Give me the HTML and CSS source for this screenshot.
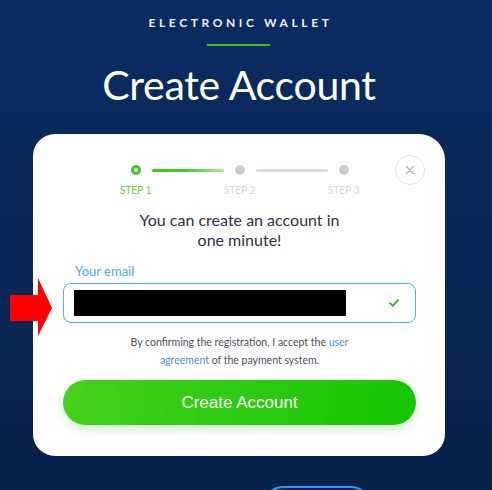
FILE: index.html
```html
<!DOCTYPE html>
<html>
<head>
<meta charset="utf-8">
<link rel="stylesheet" href="styles.css">
</head>
<body>
<div class="page">
  <header class="hero">
    <div class="eyebrow">ELECTRONIC WALLET</div>
    <div class="eyebrow-line"></div>
    <h1 class="title">Create Account</h1>
  </header>

  <div class="card-row">
    <div class="arrow">
      <svg width="42" height="60" viewBox="0 0 42 60"><polygon points="0,17 28,17 28,0 42,30 28,58 28,43 0,43" fill="#ff0000"/></svg>
    </div>
    <section class="card">
      <button class="close" aria-label="close">
        <svg width="10" height="10" viewBox="0 0 10 10"><path d="M1.5 1.5 L8.5 8.5 M8.5 1.5 L1.5 8.5" stroke="#b7bcc8" stroke-width="1.6" stroke-linecap="round"/></svg>
      </button>

      <div class="stepper">
        <div class="track">
          <span class="dot dot-active"></span>
          <span class="line line-active"></span>
          <span class="dot"></span>
          <span class="line"></span>
          <span class="dot"></span>
        </div>
        <div class="labels">
          <span class="label label-active">STEP 1</span>
          <span class="label">STEP 2</span>
          <span class="label">STEP 3</span>
        </div>
      </div>

      <p class="lead">You can create an account in<br>one minute!</p>

      <label class="field-label">Your email</label>
      <div class="input">
        <div class="redact"></div>
        <svg class="check" width="10" height="8" viewBox="0 0 10 8"><path d="M1 4.2 L3.8 6.8 L9 1.2" fill="none" stroke="#2fb81a" stroke-width="1.8" stroke-linecap="round" stroke-linejoin="round"/></svg>
      </div>

      <p class="terms">By confirming the registration, I accept the <a class="link">user<br>agreement</a> of the payment system.</p>

      <button class="submit">Create Account</button>
    </section>
  </div>

  <div class="below">
    <div class="outline-btn"></div>
  </div>
</div>
</body>
</html>
```

FILE: styles.css
```css
* { box-sizing: border-box; }
html, body { margin: 0; padding: 0; }
body {
  width: 492px;
  height: 490px;
  overflow: hidden;
  background: linear-gradient(180deg, #0b2b62 0%, #0a2857 45%, #08214a 100%);
  font-family: "Lato", "Open Sans", sans-serif;
}
.page {
  width: 478px;
  display: flex;
  flex-direction: column;
  align-items: center;
}
.hero {
  display: flex;
  flex-direction: column;
  align-items: center;
  padding-top: 15px;
}
.eyebrow {
  color: #eef2f8;
  font-size: 12px;
  font-weight: 700;
  letter-spacing: 3.6px;
  line-height: 15px;
  padding-left: 3px;
}
.eyebrow-line {
  width: 63px;
  height: 2px;
  background: #39c51a;
  margin-top: 14px;
}
.title {
  margin: 13px 0 0;
  color: #ffffff;
  font-size: 41px;
  font-weight: 400;
  line-height: 52px;
  letter-spacing: -0.3px;
}
.card-row {
  width: 478px;
  position: relative;
  margin-top: 23px;
  display: flex;
  justify-content: flex-start;
}
.arrow {
  position: absolute;
  left: 10px;
  top: 144px;
  width: 42px;
  height: 60px;
  z-index: 2;
}
.arrow svg { display: block; }
.card {
  position: relative;
  margin-left: 33px;
  width: 412px;
  background: #ffffff;
  border-radius: 22px 26px 22px 22px;
  padding: 31px 29px 31px 30px;
  display: flex;
  flex-direction: column;
  align-items: stretch;
}
.close {
  position: absolute;
  top: 21px;
  right: 20px;
  width: 30px;
  height: 30px;
  border-radius: 50%;
  border: 1px solid #e3e5ea;
  background: #fff;
  display: flex;
  align-items: center;
  justify-content: center;
  padding: 0;
}
.close svg { display: block; }
.stepper {
  display: flex;
  flex-direction: column;
  align-items: center;
}
.track {
  display: grid;
  grid-template-columns: 10px 72px 10px 72px 10px;
  column-gap: 11px;
  align-items: center;
  height: 10px;
}
.dot {
  width: 10px;
  height: 10px;
  border-radius: 50%;
  background: #c9cdd5;
}
.dot-active {
  background: #fff;
  border: 3px solid #3cc81a;
}
.line {
  height: 3px;
  border-radius: 2px;
  background: #d6d9df;
}
.line-active {
  background: linear-gradient(90deg, #3cc81a 0%, #45c820 45%, #b6e4a6 100%);
}
.labels {
  display: grid;
  grid-template-columns: 104px 104px 104px;
  margin-top: 9px;
}
.label {
  text-align: center;
  font-size: 10.5px;
  line-height: 12px;
  color: #d3d6dc;
  letter-spacing: -0.2px;
}
.label-active { color: #6cd033; }
.lead {
  margin: 14px 0 0;
  text-align: center;
  color: #2b3242;
  font-size: 16px;
  line-height: 20px;
}
.field-label {
  display: block;
  margin-top: 13px;
  padding-left: 12px;
  color: #4aa9ec;
  font-size: 13px;
  line-height: 16px;
}
.input {
  margin-top: 4px;
  height: 40px;
  border: 1px solid #45b2f0;
  border-radius: 8px;
  display: flex;
  align-items: center;
  justify-content: space-between;
  padding: 0 16px 0 10px;
}
.redact {
  width: 272px;
  height: 26px;
  background: #000;
}
.check { display: block; }
.terms {
  margin: 10px 0 0;
  text-align: center;
  color: #4a4f5c;
  font-size: 10.5px;
  line-height: 18px;
}
.link { color: #4a8fd8; }
.submit {
  margin-top: 11px;
  height: 45px;
  border: none;
  border-radius: 23px;
  background: linear-gradient(100deg, #46d21c 0%, #2ccb10 50%, #14c600 100%);
  color: #fff;
  font-family: "Liberation Sans", Arial, sans-serif;
  font-size: 17px;
  box-shadow: 0 6px 10px rgba(40, 180, 20, 0.18);
}
.below {
  width: 478px;
  display: flex;
  padding-left: 263px;
  margin-top: 30px;
}
.outline-btn {
  width: 108px;
  height: 40px;
  border: 2px solid #1fa2ee;
  border-radius: 20px;
}
```
